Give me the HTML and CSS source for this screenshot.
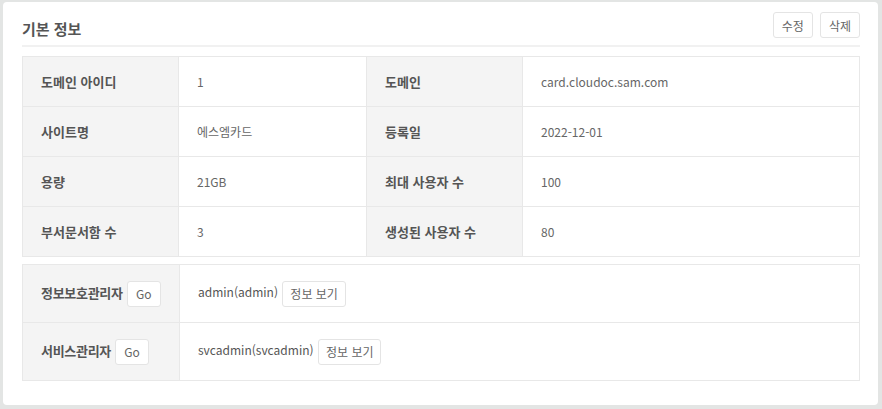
FILE: index.html
```html
<!DOCTYPE html>
<html lang="ko">
<head>
  <meta charset="UTF-8">
  <title>기본 정보</title>
  <link rel="stylesheet" href="styles.css">
</head>
<body>
  <div class="panel">
    <div class="panel-head">
      <h2>기본 정보</h2>
      <div class="actions">
        <button class="btn">수정</button>
        <button class="btn">삭제</button>
      </div>
    </div>

    <table class="info">
      <tr>
        <th>도메인 아이디</th>
        <td>1</td>
        <th>도메인</th>
        <td>card.cloudoc.sam.com</td>
      </tr>
      <tr>
        <th>사이트명</th>
        <td>에스엠카드</td>
        <th>등록일</th>
        <td>2022-12-01</td>
      </tr>
      <tr>
        <th>용량</th>
        <td>21GB</td>
        <th>최대 사용자 수</th>
        <td>100</td>
      </tr>
      <tr>
        <th>부서문서함 수</th>
        <td>3</td>
        <th>생성된 사용자 수</th>
        <td>80</td>
      </tr>
    </table>

    <table class="info admins">
      <tr>
        <th>정보보호관리자 <button class="btn">Go</button></th>
        <td>admin(admin) <button class="btn">정보 보기</button></td>
      </tr>
      <tr>
        <th>서비스관리자 <button class="btn">Go</button></th>
        <td>svcadmin(svcadmin) <button class="btn">정보 보기</button></td>
      </tr>
    </table>
  </div>
</body>
</html>
```

FILE: styles.css
```css
body {
  margin: 0;
  background: #e3e5e4;
  font-family: "Noto Sans CJK KR", "Noto Sans", sans-serif;
  color: #555;
}
.panel {
  margin: 2px 4px 4px 3px;
  height: 403px;
  box-sizing: border-box;
  background: white;
  border-radius: 4px;
  padding: 10px 18px 0 19px;
}
.panel-head {
  display: flex;
  justify-content: space-between;
  align-items: center;
  border-bottom: 2px solid #f1f1f1;
  height: 33px;
}
.panel-head h2 {
  margin: 0;
  font-size: 15px;
  font-weight: bold;
  color: #555;
}
.actions {
  display: flex;
  gap: 7px;
  align-self: flex-start;
}
.actions .btn {
  padding: 0 8px;
}
.btn {
  font-family: inherit;
  font-size: 12px;
  color: #666;
  background: white;
  border: 1px solid #e4e4e4;
  border-radius: 3px;
  height: 26px;
  padding: 0 7px;
  cursor: pointer;
}
.info {
  width: 100%;
  table-layout: fixed;
  border-collapse: collapse;
  margin-top: 9px;
  font-size: 12px;
}
.info th, .info td {
  border: 1px solid #e8e8e8;
  height: 50px;
  text-align: left;
  padding: 0 18px;
  white-space: nowrap;
}
.info th {
  background: #f4f4f4;
  font-size: 13px;
  font-weight: bold;
  color: #555;
  width: 156px;
  box-sizing: border-box;
}
.info td {
  color: #666;
  width: 188px;
  box-sizing: border-box;
}
.info td:last-child {
  width: auto;
}
.info.admins {
  margin-top: 7px;
}
.info.admins th, .info.admins td {
  height: 58px;
}
.info.admins th {
  width: 157px;
  letter-spacing: -0.3px;
}
.info.admins .btn {
  margin-left: 1px;
  vertical-align: middle;
  letter-spacing: 0;
}
.info.admins th .btn {
  padding: 0 8px;
  font-weight: normal;
}
.info.admins td {
  font-size: 12px;
  color: #555;
}
```
